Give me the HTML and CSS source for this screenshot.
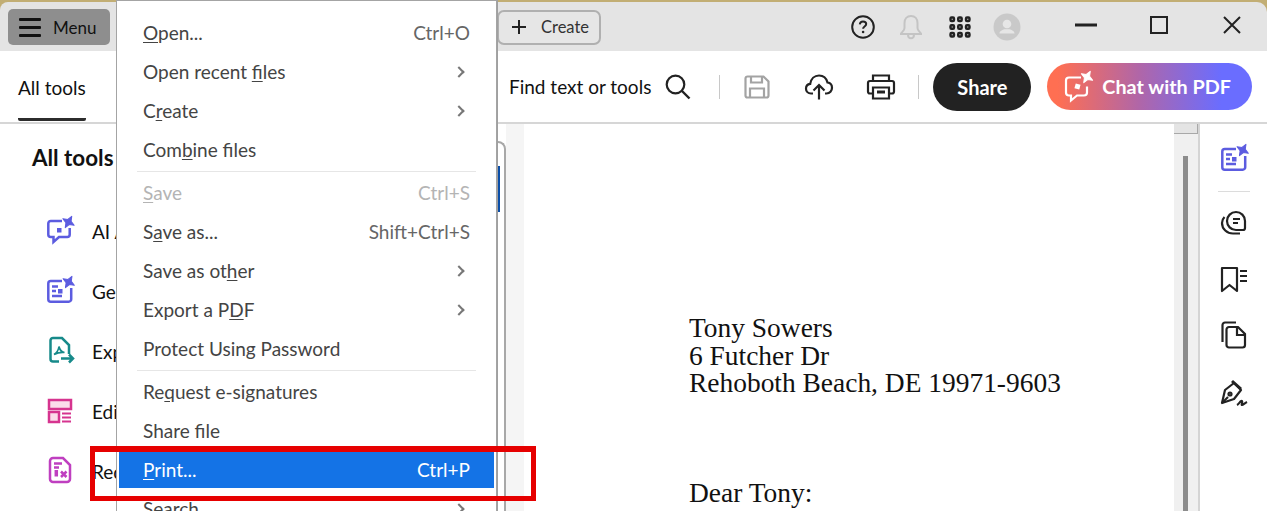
FILE: index.html
```html
<!DOCTYPE html>
<html lang="en">
<head>
<meta charset="utf-8">
<title>Adobe Acrobat</title>
<link rel="stylesheet" href="styles.css">
</head>
<body>
<svg class="defs" width="0" height="0" aria-hidden="true">
  <defs>
    <path id="sparkle" d="M0-6.5L1.900-1.900L6.500 0L1.900 1.900L0 6.500L-1.900 1.900L-6.500 0L-1.900-1.900Z" stroke-linejoin="round"/>
    <g id="gen-icon">
      <path d="M16 4H4.800A2.500 2.500 0 0 0 2.300 6.500V22.200A2.500 2.500 0 0 0 4.800 24.700H22.700A2.500 2.500 0 0 0 25.200 22.200V11" fill="none" stroke="#5c5ce0" stroke-width="2.500"/>
      <path d="M6 9.500h6M6 14h4M6 19h10" stroke="#5c5ce0" stroke-width="2.400" fill="none"/>
      <use href="#sparkle" transform="translate(22.700 5) rotate(30)" fill="#5c5ce0" stroke="#5c5ce0"/>
      <rect x="12" y="12" width="4.500" height="4.500" fill="#5c5ce0"/>
    </g>
  </defs>
</svg>
<div class="app">
  <header class="titlebar">
    <button class="menu-btn"><span class="burger"><i></i><i></i><i></i></span><span>Menu</span></button>
    <button class="create-btn"><svg width="16" height="16" viewBox="0 0 16 16"><path d="M8 1v14M1 8h14" stroke="#222" stroke-width="2"/></svg><span>Create</span></button>
    <div class="title-icons">
      <svg class="ic-help" width="24" height="24" viewBox="0 0 24 24"><circle cx="12" cy="12" r="10.800" fill="none" stroke="#222" stroke-width="2"/><path d="M8.800 9.400c.2-2 1.500-3 3.200-3 1.900 0 3.200 1.100 3.200 2.700 0 2.400-3.100 2.400-3.100 4.600" fill="none" stroke="#222" stroke-width="2"/><circle cx="12.100" cy="17" r="1.300" fill="#222"/></svg>
      <svg class="ic-bell" width="24" height="26" viewBox="0 0 24 26"><path d="M12 2c-4 0-6.500 3-6.500 7v5c0 2.500-2 3.500-3.500 5.500V20h20v-.5c-1.500-2-3.500-3-3.500-5.500V9c0-4-2.500-7-6.500-7Z" fill="none" stroke="#c4c4c4" stroke-width="2"/><path d="M9 20.500c0 2.500 1.300 3.700 3 3.700s3-1.200 3-3.700" fill="none" stroke="#c4c4c4" stroke-width="2"/></svg>
      <svg class="ic-grid" width="22" height="22" viewBox="0 0 22 22" fill="none" stroke="#222" stroke-width="2.400"><rect x="1.500" y="1.500" width="3.500" height="3.500" rx="1"/><rect x="9.200" y="1.500" width="3.500" height="3.500" rx="1"/><rect x="17" y="1.500" width="3.500" height="3.500" rx="1"/><rect x="1.500" y="9.200" width="3.500" height="3.500" rx="1"/><rect x="9.200" y="9.200" width="3.500" height="3.500" rx="1"/><rect x="17" y="9.200" width="3.500" height="3.500" rx="1"/><rect x="1.500" y="17" width="3.500" height="3.500" rx="1"/><rect x="9.200" y="17" width="3.500" height="3.500" rx="1"/><rect x="17" y="17" width="3.500" height="3.500" rx="1"/></svg>
      <svg class="ic-avatar" width="28" height="28" viewBox="0 0 28 28"><circle cx="14" cy="14" r="13.500" fill="#c9c9c9"/><circle cx="14" cy="11" r="4.300" fill="#e6e6e6"/><path d="M6.500 20.500c0-2.500 3-3.500 5-4.200h5c2 .7 5 1.700 5 4.200Z" fill="#e6e6e6"/></svg>
    </div>
    <div class="window-controls">
      <svg width="22" height="4" viewBox="0 0 22 4"><rect width="22" height="3" y=".5" fill="#222"/></svg>
      <svg width="18" height="18" viewBox="0 0 18 18"><rect x="1" y="1" width="16" height="16" fill="none" stroke="#222" stroke-width="2"/></svg>
      <svg width="18" height="18" viewBox="0 0 18 18"><path d="M1 1l16 16M17 1L1 17" stroke="#222" stroke-width="2"/></svg>
    </div>
  </header>

  <nav class="toolbar">
    <a class="tab">All tools</a>
    <span class="find">Find text or tools</span>
    <svg class="tb-search" width="26" height="26" viewBox="0 0 26 26"><circle cx="10.500" cy="10.500" r="8.800" fill="none" stroke="#222" stroke-width="2.200"/><path d="M17 17l7.500 7.500" stroke="#222" stroke-width="2.400"/></svg>
    <span class="vline first"></span>
    <svg class="tb-save" width="26" height="24" viewBox="0 0 26 24" fill="none" stroke="#a3a3a3" stroke-width="2.200"><path d="M3.500 1.500h16l5 5v14a2 2 0 0 1-2 2h-19a2 2 0 0 1-2-2v-17a2 2 0 0 1 2-2Z"/><path d="M7 1.500v6h11v-6M6 22.500v-9h14v9"/></svg>
    <svg class="tb-upload" width="28" height="26" viewBox="0 0 28 26" fill="none" stroke="#222" stroke-width="2.200"><path d="M8 19.500H6c-3 0-5-2.200-5-4.800 0-2.500 1.800-4.500 4.200-4.800C6 5 9.500 1.500 14 1.500c4.300 0 7.500 3 8.500 7 2.700.3 4.500 2.500 4.500 5.200 0 3-2.200 5.800-5.500 5.800H20"/><path d="M14 25.500V11M8.500 16.500 14 11l5.500 5.500"/></svg>
    <svg class="tb-print" width="28" height="26" viewBox="0 0 28 26" fill="none" stroke="#222" stroke-width="2.200"><path d="M6 7V1.500h16V7"/><path d="M6 19.500H3a2 2 0 0 1-2-2V9a2 2 0 0 1 2-2h22a2 2 0 0 1 2 2v8.500a2 2 0 0 1-2 2h-3"/><path d="M6 13.500h16v11H6z"/><path d="M10 18h8" stroke-width="3"/></svg>
    <span class="vline second"></span>
    <button class="share">Share</button>
    <button class="chat">
      <svg width="30" height="30" viewBox="0 0 30 30"><path d="M17 5.500H5a3 3 0 0 0-3 3v12a3 3 0 0 0 3 3h2v5l6-5h7a3 3 0 0 0 3-3v-6" fill="none" stroke="#fff" stroke-width="2.200"/><use href="#sparkle" transform="translate(23 5) rotate(30)" fill="#fff" stroke="#fff"/><rect x="11" y="12" width="5" height="5" fill="#fff" transform="rotate(15 13.500 14.500)"/></svg>
      <span>Chat with PDF</span>
    </button>
  </nav>

  <main class="workspace">
    <aside class="sidebar">
      <h2>All tools</h2>
      <ul class="tools">
        <li><svg width="28" height="28" viewBox="0 0 28 28"><g transform="translate(0 1)"><path d="M16 3H4.800A2.500 2.500 0 0 0 2.300 5.500V16.500A2.500 2.500 0 0 0 4.800 19H7.500V24L13 19H21.200A2.500 2.500 0 0 0 23.700 16.500V10" fill="none" stroke="#5c5ce0" stroke-width="2.500"/><use href="#sparkle" transform="translate(22.500 4) rotate(30)" fill="#5c5ce0" stroke="#5c5ce0"/><rect x="11" y="10" width="4.500" height="4.500" fill="#5c5ce0"/></g></svg><span>AI Assistant</span></li>
        <li><svg width="28" height="28" viewBox="0 0 28 28"><use href="#gen-icon"/></svg><span>Generative summary</span></li>
        <li><svg width="28" height="28" viewBox="0 0 28 28" fill="none" stroke="#178a8a" stroke-width="2.500"><path d="M13 24.500H7A2.500 2.500 0 0 1 4.500 22V3.500A2.500 2.500 0 0 1 7 1H16L23 8V17"/><path d="M8 17.500c2.500-1.500 4.500-4.500 5-8 .5 3 3 5.500 5.500 6-3-.3-7 .3-10.500 2Z" stroke-width="1.700"/><path d="M15 21.500H27M23 17.500L27 21.500L23 25.500"/></svg><span>Export a PDF</span></li>
        <li><svg width="28" height="28" viewBox="0 0 28 28" fill="#fbdcea" stroke="#d6348f" stroke-width="2.500"><rect x="3" y="3" width="22" height="9"/><rect x="3" y="15" width="10" height="10"/><path d="M16 16.500h9M16 20.500h9M16 24.500h9" fill="none" stroke-width="2"/></svg><span>Edit a PDF</span></li>
        <li><svg width="28" height="28" viewBox="0 0 28 28" fill="none" stroke="#bf3fc0" stroke-width="2.500"><path d="M7 1H17L24 8V22A3 3 0 0 1 21 25H7A3 3 0 0 1 4 22V4A3 3 0 0 1 7 1Z"/><path d="M8 6.500h8M8 10.500h5"/><path d="M10.300 13v6.500" stroke-width="3.500"/><path d="M15 14.500l5.500 5.500M20.500 14.500L15 20"/></svg><span>Request e-signatures</span></li>
      </ul>
    </aside>
    <div class="handle"><span class="handle-mark"></span></div>
    <div class="gutter"></div>
    <article class="doc">
      <p>Tony Sowers<br>6 Futcher Dr<br>Rehoboth Beach, DE 19971-9603</p>
      <p class="greeting">Dear Tony:</p>
    </article>
    <div class="scroll"><span class="scroll-up"></span><span class="scroll-thumb"></span></div>
    <aside class="rail">
      <svg class="r1" width="28" height="28" viewBox="0 0 28 28"><use href="#gen-icon"/></svg>
      <span class="rail-sep"></span>
      <svg class="r2" width="26" height="26" viewBox="0 0 26 26" fill="none" stroke="#222" stroke-width="2.200"><path d="M15 3a9 9 0 0 0-9 9c0 5 4 9 9 9h7a2 2 0 0 0 2-2v-7a9 9 0 0 0-9-9Z"/><path d="M3.500 8C1.500 10 1 12 1 14c0 6 5 10.500 11 10.500h7"/><path d="M12 10h7M12 14h5" stroke-width="2"/></svg>
      <svg class="r3" width="28" height="28" viewBox="0 0 28 28" fill="none" stroke="#222" stroke-width="2.200"><path d="M2 2h15v23l-7.500-6L2 25Z" stroke-linejoin="round"/><path d="M20 5h7M20 10h7M20 15h7"/></svg>
      <svg class="r4" width="26" height="28" viewBox="0 0 26 28" fill="none" stroke="#222" stroke-width="2.200"><path d="M15 1.500H4A2.500 2.500 0 0 0 1.500 4v17"/><path d="M8 6h9l7 7v11a2.500 2.500 0 0 1-2.500 2.500H8A2.500 2.500 0 0 1 5.500 24V8.500A2.500 2.500 0 0 1 8 6Z"/><path d="M16 6v8h8"/></svg>
      <svg class="r5" width="28" height="28" viewBox="0 0 28 28" fill="none" stroke="#222" stroke-width="2.200"><path d="M2 23 5 10l9-7 7 7-7 9-12 4Z" stroke-linejoin="round"/><path d="M12 1l9 8" stroke-width="3"/><path d="M2 23l6-6"/><circle cx="10" cy="14" r="1.500"/><path d="M17 25c2-1 4-5 5-4s-1 4 0 4 3-2 5-3"/></svg>
    </aside>
  </main>
</div>

<div class="menu">
  <div class="item"><span><u>O</u>pen...</span><kbd>Ctrl+O</kbd></div>
  <div class="item"><span>Open recent <u>f</u>iles</span><i class="chev"></i></div>
  <div class="item"><span>C<u>r</u>eate</span><i class="chev"></i></div>
  <div class="item"><span>Com<u>b</u>ine files</span></div>
  <hr>
  <div class="item off"><span><u>S</u>ave</span><kbd>Ctrl+S</kbd></div>
  <div class="item"><span>S<u>a</u>ve as...</span><kbd>Shift+Ctrl+S</kbd></div>
  <div class="item"><span>Save as ot<u>h</u>er</span><i class="chev"></i></div>
  <div class="item"><span>Export a P<u>D</u>F</span><i class="chev"></i></div>
  <div class="item"><span>Protect Using Password</span></div>
  <hr>
  <div class="item"><span>Re<u>q</u>uest e-signatures</span></div>
  <div class="item"><span>Share file</span></div>
  <div class="item active"><span><u>P</u>rint...</span><kbd>Ctrl+P</kbd></div>
  <div class="item"><span>Search</span><i class="chev"></i></div>
</div>
<div class="callout"></div>
</body>
</html>
```
FILE: styles.css
```css
* { box-sizing: border-box; }
html, body { margin: 0; height: 511px; overflow: hidden; background: #fff; }
body { font-family: Lato, "Open Sans", sans-serif; color: #222; position: relative; }
.defs { position: absolute; }
svg { overflow: visible; flex: none; }
button { font: inherit; color: inherit; padding: 0; }

.app { display: flex; flex-direction: column; height: 511px; background: #c2ae74; padding-top: 2px; }

.titlebar { display: flex; align-items: center; height: 49px; flex: none; background: #e4e4e4; border-radius: 8px 10px 0 0; padding-left: 8px; }
.menu-btn { display: flex; align-items: center; gap: 12px; width: 102px; height: 36px; background: #8e8e8e; border: 0; border-radius: 5px; padding-left: 11px; font-size: 17px; color: #111; margin-top: 1px; }
.burger { display: flex; flex-direction: column; gap: 5px; width: 22px; }
.burger i { display: block; height: 3px; background: #111; border-radius: 1px; }
.create-btn { display: flex; align-items: center; gap: 14px; width: 104px; height: 35px; margin-left: 387px; margin-top: 1px; padding-left: 12px; background: #e6e6e6; border: 2px solid #b0b0b0; border-radius: 7px; font-size: 16.500px; color: #333; }
.title-icons { display: flex; align-items: center; margin-left: 250px; margin-top: 1px; }
.ic-bell { margin-left: 24px; }
.ic-grid { margin-left: 26px; }
.ic-avatar { margin-left: 22px; }
.window-controls { display: flex; align-items: center; margin-left: 54px; margin-bottom: 3px; }
.window-controls svg:nth-child(2) { margin-left: 53px; }
.window-controls svg:nth-child(3) { margin-left: 55px; }

.toolbar { display: flex; align-items: center; height: 73px; flex: none; background: #fff; border-bottom: 2px solid #d6d6d6; padding-left: 18px; }
.tab { display: flex; align-items: center; align-self: stretch; width: 68px; font-size: 19px; color: #111; border-bottom: 3px solid #2c2c2c; border-radius: 0 0 2px 2px; margin-bottom: 1px; padding-top: 6px; white-space: nowrap; }
.find { margin-left: 423px; font-size: 19px; color: #111; white-space: nowrap; }
.tb-search { margin-left: 14px; }
.vline { width: 1px; height: 24px; background: #c8c8c8; }
.vline.first { margin-left: 28px; }
.tb-save { margin-left: 24px; }
.tb-upload { margin-left: 35px; }
.tb-print { margin-left: 34px; }
.vline.second { margin-left: 23px; }
.share { margin-left: 14px; width: 98px; height: 48px; border: 0; border-radius: 24px; background: #222; color: #fff; font-size: 20px; font-weight: 700; }
.chat { display: flex; align-items: center; gap: 8px; margin-left: 16px; width: 205px; height: 47px; border: 0; border-radius: 24px; padding-left: 17px; color: #fff; font-size: 19.800px; font-weight: 700; background: linear-gradient(90deg, #ff6f52 5%, #b066a8 45%, #6a6dff 85%); white-space: nowrap; }
.chat span { padding-bottom: 2px; }

.workspace { display: flex; flex: 1; min-height: 0; background: #fff; }
.sidebar { width: 497px; flex: none; padding: 21px 0 0 32px; overflow: hidden; }
.sidebar h2 { margin: 0 0 46px; font-size: 22.400px; line-height: 26px; font-weight: 700; color: #111; }
.tools { list-style: none; margin: 0; padding: 0 0 0 14px; display: flex; flex-direction: column; gap: 32px; }
.tools li { display: flex; align-items: center; gap: 18px; height: 28px; font-size: 19px; color: #111; white-space: nowrap; }
.handle { position: relative; width: 9px; flex: none; margin-top: 17px; border-top: 2px solid #a8a8a8; border-right: 2px solid #a8a8a8; border-radius: 0 8px 0 0; }
.handle-mark { position: absolute; left: 0; top: 23px; width: 3px; height: 46px; background: #0a4ea8; }
.gutter { width: 18px; flex: none; background: #f5f5f5; }
.doc { flex: 1; min-width: 0; padding: 191px 0 0 165px; font-family: "Liberation Serif", serif; font-size: 27.450px; line-height: 27.500px; color: #111; white-space: nowrap; overflow: hidden; }
.doc p { margin: 0; }
.doc .greeting { margin-top: 82px; }
.scroll { position: relative; width: 28px; flex: none; background: #f0f0f0; border-left: 2px solid #fff; border-right: 2px solid #d4d4d4; }
.scroll-up { display: block; height: 10px; background: #e4e4e4; border-right: 1px solid #a8a8a8; border-bottom: 1px solid #a8a8a8; }
.scroll-thumb { position: absolute; left: 9px; top: 32px; bottom: 0; width: 5px; background: #8c8c8c; }
.rail { display: flex; flex-direction: column; align-items: center; width: 67px; flex: none; padding-top: 21px; }
.rail-sep { width: 32px; height: 1px; background: #dcdcdc; margin-top: 18px; margin-bottom: 17px; }
.r3, .r5 { margin-top: 31px; }
.r4 { margin-top: 27px; }

.menu { position: absolute; left: 116px; top: 0; width: 381px; height: 511px; overflow: hidden; display: flex; flex-direction: column; gap: 3px; padding: 14px 2px 0; background: #fff; border: 1px solid #a4a4a4; border-bottom: 0; box-shadow: 1px 0 0 #a0a0a0; }
.menu hr { margin: 0 18px 0 18px; border: 0; height: 1px; background: #e6e6e6; flex: none; }
.item { display: flex; align-items: center; justify-content: space-between; height: 36px; flex: none; padding: 0 24px 2px; font-size: 19px; color: #444; white-space: nowrap; }
.item u { text-underline-offset: 2px; }
.item kbd { font: inherit; color: #666; }
.item.off, .item.off kbd { color: #b4b4b4; }
.item.active { background: #1473e6; color: #fff; }
.item.active kbd { color: #fff; }
.chev { display: block; width: 8px; height: 8px; margin-right: 7px; margin-top: 2px; border-top: 2px solid #777; border-right: 2px solid #777; transform: rotate(45deg); }
.callout { position: absolute; left: 90px; top: 446px; width: 446px; height: 55px; border: 5px solid #e60000; border-top-width: 6px; pointer-events: none; }
```
